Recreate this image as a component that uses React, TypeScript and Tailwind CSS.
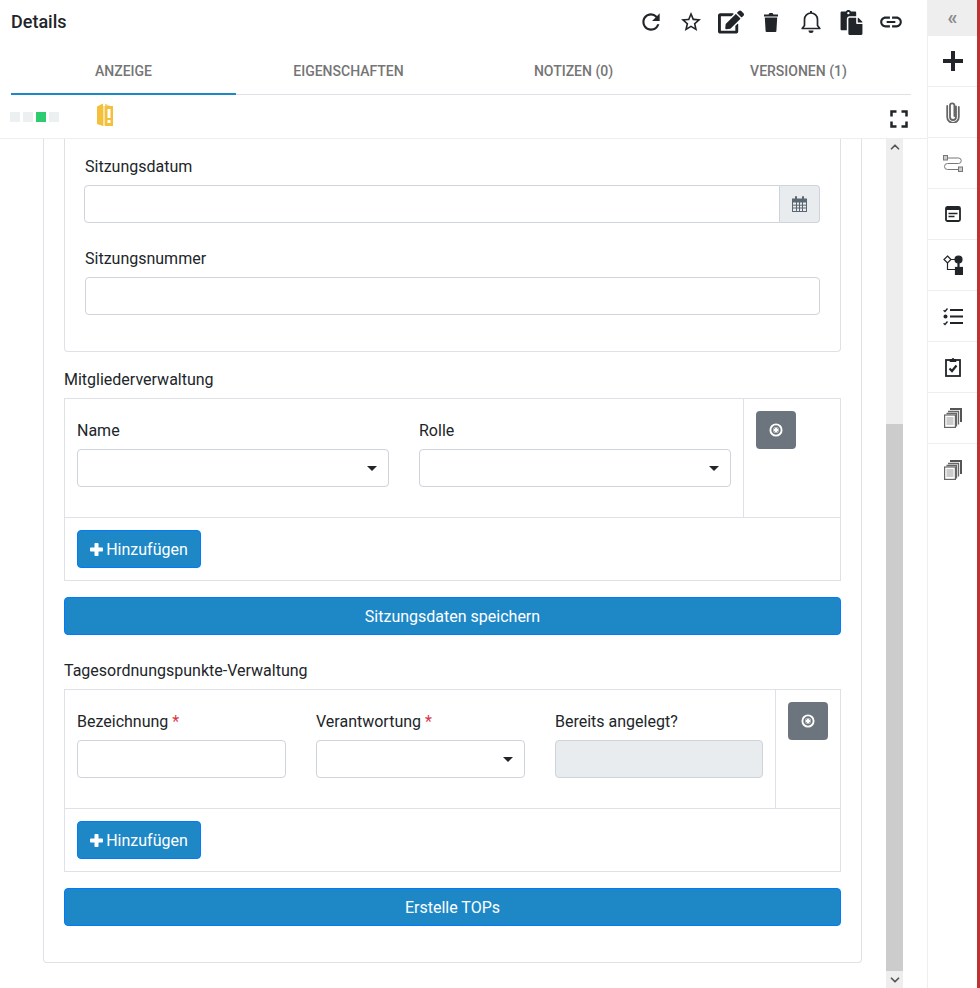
import { FaEdit, FaPaste } from "react-icons/fa";
import {
  MdFullscreen,
  MdLink,
  MdRefresh,
  MdStarBorder,
} from "react-icons/md";
import { ChevronDown, ChevronUp } from "lucide-react";

const StopIcon = () => (
  <svg width="14" height="14" viewBox="0 0 14 14">
    <circle cx="7" cy="7" r="5.600" fill="none" stroke="#fff" strokeWidth="1.900" />
    <rect x="4.500" y="4.500" width="5" height="5" rx="1" fill="#fff" />
    <path d="M4.700 4.700l1 1M9.300 4.700l-1 1M4.700 9.300l1-1M9.300 9.300l-1-1" stroke="#6c757d" strokeWidth="1" />
  </svg>
);

const StopButton = () => (
  <button className="flex h-[38px] w-10 items-center justify-center rounded bg-[#6c757d]">
    <StopIcon />
  </button>
);

const Caret = () => (
  <div className="h-0 w-0 border-x-[5px] border-t-[5px] border-x-transparent border-t-[#212529]" />
);

const SelectBox = ({ className }: { className: string }) => (
  <div className={`flex h-[38px] items-center justify-end rounded border border-[#ced4da] bg-white pr-[11px] ${className}`}>
    <Caret />
  </div>
);

const AddButton = () => (
  <button className="flex h-[38px] w-[124px] items-center justify-center gap-[3px] rounded border border-[#007bff] bg-[#1e88c7] pt-px text-white">
    <svg width="13" height="13" viewBox="0 0 13 13" fill="#fff">
      <rect x="4.500" width="4" height="13" rx=".8" />
      <rect y="4.500" width="13" height="4" rx=".8" />
    </svg>
    <span>Hinzufügen</span>
  </button>
);

const WideButton = ({ children }: { children: string }) => (
  <button className="block h-[38px] w-full rounded border border-[#007bff] bg-[#1e88c7] pt-px text-white">
    {children}
  </button>
);

const Required = () => <span className="text-[#dc3545]"> *</span>;

const DocsIcon = () => (
  <svg width="18" height="20" viewBox="0 0 18 20" fill="none">
    <path d="M6 1h11v13" stroke="#555" strokeWidth="2" />
    <path d="M4 3.500h10.500v13" stroke="#666" strokeWidth="1.300" />
    <path d="M2.500 5.500h10v13" stroke="#666" strokeWidth="1.300" />
    <rect x=".6" y="7" width="10.800" height="12.400" fill="#fff" stroke="#666" strokeWidth="1.200" />
    <path d="M2.500 10h7M2.500 12h7M2.500 14h7M2.500 16h7" stroke="#999" strokeWidth="1.200" />
  </svg>
);

const sideIcons = [
  <svg key="add" width="20" height="20" viewBox="0 0 20 20" fill="#212529">
    <rect x="8" width="4" height="20" />
    <rect y="8" width="20" height="4" />
  </svg>,
  <svg key="clip" width="14" height="22" viewBox="0 0 14 22" fill="none" stroke="#666" strokeWidth="1.800" strokeLinecap="round">
    <path d="M10 5.500V16a3 3 0 0 1-6 0V4.500a2.200 2.200 0 0 1 4.400 0V15" />
    <path d="M12.800 6v10a5.800 5.800 0 0 1-11.600 0V5" />
  </svg>,
  <svg key="flow" width="20" height="17" viewBox="0 0 20 17" fill="none" stroke="#777" strokeWidth="1">
    <rect x=".5" y=".5" width="4" height="4.500" fill="#ccc" />
    <path d="M4.500 3h11a2.700 2.700 0 0 1 0 5.500H4.500a3 3 0 0 0 0 6h10.500" />
    <rect x="15.500" y="12" width="4" height="4.500" fill="#ccc" />
  </svg>,
  <svg key="form" width="16" height="16" viewBox="0 0 16 16" fill="none" stroke="#212529">
    <rect x="1" y="1" width="14" height="14" rx="1.500" strokeWidth="1.800" />
    <path d="M1 3h14" strokeWidth="2" />
    <path d="M3.500 7.500h9M3.500 10.500h6" strokeWidth="1.500" />
  </svg>,
  <svg key="shape" width="20" height="20" viewBox="0 0 20 20" fill="none" stroke="#212529" strokeWidth="1.200">
    <path d="M4.500 1 8 4.500 4.500 8 1 4.500Z" />
    <path d="M4.500 8v6.500H12M8 4.500h5" />
    <circle cx="15.500" cy="4.500" r="3.500" fill="#212529" />
    <path d="M15.500 8v5" strokeWidth="2.200" />
    <rect x="12.500" y="12.500" width="7.500" height="7.500" fill="#212529" />
  </svg>,
  <svg key="list" width="20" height="19" viewBox="0 0 20 19" fill="none" stroke="#212529">
    <path d="M7 3h13M7 9.500h13M7 16h13" strokeWidth="2.200" />
    <path d="M.6 3.200 2 4.500 4.500 1.500M.6 16.200 2 17.500 4.500 14.500" strokeWidth="1.400" />
    <circle cx="2.500" cy="9.500" r="2" fill="#212529" stroke="none" />
  </svg>,
  <svg key="check" width="16" height="20" viewBox="0 0 16 20" fill="none" stroke="#212529">
    <rect x="1" y="3" width="14" height="16" strokeWidth="1.800" />
    <path d="M5 4.500V2.500h2a1 1 0 0 1 2 0h2v2Z" fill="#212529" strokeWidth="1" />
    <path d="m4.500 11.500 2.500 2.500 4.500-5.500" strokeWidth="2.200" />
  </svg>,
  <DocsIcon key="docs1" />,
  <DocsIcon key="docs2" />,
];

const topIcons = [
  <MdRefresh key="refresh" size={26} />,
  <MdStarBorder key="star" size={24} />,
  <FaEdit key="edit" size={26} />,
  <svg key="trash" width="16" height="20" viewBox="0 0 16 20" fill="#212529">
    <path d="M1 2.500h4.500L6.500 1h3l1 1.500H15V4.500H1Z" />
    <path d="M1.800 5.500h12.400L13.400 19a1 1 0 0 1-1 1H3.600a1 1 0 0 1-1-1Z" />
  </svg>,
  <svg key="bell" width="20" height="24" viewBox="0 0 20 24" fill="none" stroke="#212529" strokeWidth="1.700">
    <path d="M1.200 18.500h17.600l-2.300-3V9.500a6.500 6.500 0 0 0-13 0v6Z" strokeLinejoin="round" />
    <path d="M10 3V1" strokeWidth="2" />
    <path d="M7.500 20.500a2.500 2.500 0 0 0 5 0Z" fill="#212529" stroke="none" />
  </svg>,
  <FaPaste key="paste" size={25} />,
  <MdLink key="link" size={26} />,
];

const tabs = ["Anzeige", "Eigenschaften", "Notizen (0)", "Versionen (1)"];

const BinderIcon = () => (
  <svg width="16" height="24" viewBox="0 0 16 24">
    <path d="M0 3.500 6 .5V23l-6-2Z" fill="#f4c03c" />
    <path d="M6 3h2V23H6Z" fill="#fbe3a6" />
    <path d="M8 3h8V23H8Z" fill="#f4c03c" />
    <path d="M8 .5 13 3H8Z" fill="#f8d273" />
    <rect x="10.500" y="6" width="3" height="9" fill="#fff" />
    <rect x="10.500" y="17" width="3" height="3" fill="#fff" />
  </svg>
);

export default function App() {
  return (
    <div className="flex h-[988px] w-[980px] overflow-hidden bg-white font-['Roboto',sans-serif] text-base text-[#212529]">
      <main className="flex w-[927px] flex-col">
        <header className="flex h-[47px] items-center pb-[3px] pl-[11px] pr-4">
          <h1 className="text-lg font-medium">Details</h1>
          <div className="ml-auto flex">
            {topIcons.map((icon, i) => (
              <div key={i} className="flex h-6 w-10 items-center justify-center text-[#212529]">
                {icon}
              </div>
            ))}
          </div>
        </header>

        <nav className="ml-[11px] flex h-[48px] w-[900px] border-b border-[#dee2e6]">
          {tabs.map((tab, i) => (
            <div
              key={tab}
              className={`relative flex flex-1 items-center justify-center text-sm font-medium uppercase text-[#757575] ${
                i === 0 ? "after:absolute after:inset-x-0 after:-bottom-px after:h-0.5 after:bg-[#1e88c7]" : ""
              }`}
            >
              {tab}
            </div>
          ))}
        </nav>

        <div className="flex h-[44px] items-center border-b border-[#eceef0] pl-[10px]">
          <div className="flex gap-[3px]">
            <div className="size-[10px] bg-[#ecf0f1]" />
            <div className="size-[10px] bg-[#ecf0f1]" />
            <div className="size-[10px] bg-[#2ecc71]" />
            <div className="size-[10px] bg-[#ecf0f1]" />
          </div>
          <div className="ml-[38px] -mt-1">
            <BinderIcon />
          </div>
          <div className="ml-auto mr-[13px] mt-[5px]">
            <MdFullscreen size={30} color="#212529" />
          </div>
        </div>

        <div className="flex min-h-0 flex-1">
          <div className="w-[886px] shrink-0 pl-[43px]">
            <section className="h-[824px] w-[819px] rounded-b border-x border-b border-[#dee2e6] px-5">
              <div className="h-[213px] w-[777px] rounded-b border-x border-b border-[#dee2e6] px-5">
                <label className="block pt-[16px] leading-6">Sitzungsdatum</label>
                <div className="-ml-px mt-[6px] flex h-[38px]">
                  <div className="flex-1 rounded-l border border-[#ced4da]" />
                  <div className="flex w-[40px] items-center justify-center rounded-r border border-l-0 border-[#ced4da] bg-[#e9ecef]">
                    <svg width="15" height="16" viewBox="0 0 15 16">
                      <path d="M0 2.500h15V16H0Z" fill="#5b6670" />
                      <path d="M1 6.500h13V15H1Z" fill="#e9ecef" />
                      <path d="M4.500 6v9M7.500 6v9M10.500 6v9M1 9.200h13M1 12h13" stroke="#5b6670" strokeWidth="1" />
                      <rect x="3" y="0" width="2" height="4" rx="1" fill="#5b6670" />
                      <rect x="10" y="0" width="2" height="4" rx="1" fill="#5b6670" />
                    </svg>
                  </div>
                </div>
                <label className="mt-6 block leading-6">Sitzungsnummer</label>
                <div className="mt-[6px] h-[38px] rounded border border-[#ced4da]" />
              </div>

              <h2 className="mt-4 leading-6">Mitgliederverwaltung</h2>
              <div className="mt-[6px] w-[777px] border border-[#dee2e6]">
                <div className="flex h-[119px] border-b border-[#dee2e6]">
                  <div className="flex w-[679px] gap-[30px] border-r border-[#dee2e6] px-3 pt-5">
                    <div className="w-[312px]">
                      <label className="block leading-6">Name</label>
                      <SelectBox className="mt-[6px]" />
                    </div>
                    <div className="w-[312px]">
                      <label className="block leading-6">Rolle</label>
                      <SelectBox className="mt-[6px]" />
                    </div>
                  </div>
                  <div className="pl-3 pt-3">
                    <StopButton />
                  </div>
                </div>
                <div className="h-[62px] px-3 pt-3">
                  <AddButton />
                </div>
              </div>
              <div className="mt-4 w-[777px]">
                <WideButton>Sitzungsdaten speichern</WideButton>
              </div>

              <h2 className="mt-6 leading-6">Tagesordnungspunkte-Verwaltung</h2>
              <div className="mt-[6px] w-[777px] border border-[#dee2e6]">
                <div className="flex h-[119px] border-b border-[#dee2e6]">
                  <div className="flex w-[711px] gap-[30px] border-r border-[#dee2e6] px-3 pt-5">
                    <div className="w-[209px]">
                      <label className="block leading-6">
                        Bezeichnung
                        <Required />
                      </label>
                      <div className="mt-[6px] h-[38px] rounded border border-[#ced4da]" />
                    </div>
                    <div className="w-[209px]">
                      <label className="block leading-6">
                        Verantwortung
                        <Required />
                      </label>
                      <SelectBox className="mt-[6px]" />
                    </div>
                    <div className="w-[208px]">
                      <label className="block leading-6">Bereits angelegt?</label>
                      <div className="mt-[6px] h-[38px] rounded border border-[#ced4da] bg-[#e9ecef]" />
                    </div>
                  </div>
                  <div className="pl-3 pt-3">
                    <StopButton />
                  </div>
                </div>
                <div className="h-[62px] px-3 pt-3">
                  <AddButton />
                </div>
              </div>
              <div className="mt-4 w-[777px]">
                <WideButton>Erstelle TOPs</WideButton>
              </div>
            </section>
          </div>

          <div className="flex w-[17px] flex-col bg-[#eee]">
            <div className="flex h-[16px] items-center justify-center">
              <ChevronUp size={14} strokeWidth={3} color="#555" />
            </div>
            <div className="h-[269px]" />
            <div className="flex-1 bg-[#ccc]" />
            <div className="flex h-[17px] items-center justify-center">
              <ChevronDown size={14} strokeWidth={3} color="#555" />
            </div>
          </div>
        </div>
      </main>

      <aside className="w-[50px] border-l border-[#eee]">
        <div className="flex h-9 items-center justify-center bg-[#eee] pb-[3px] text-xl font-bold leading-none text-[#8a8a8a]">
          «
        </div>
        {sideIcons.map((icon, i) => (
          <div
            key={i}
            className={`flex h-[51px] items-center justify-center ${i < sideIcons.length - 1 ? "border-b border-[#eee]" : ""}`}
          >
            {icon}
          </div>
        ))}
      </aside>
      <div className="w-[3px] bg-[#c03232]" />
    </div>
  );
}
